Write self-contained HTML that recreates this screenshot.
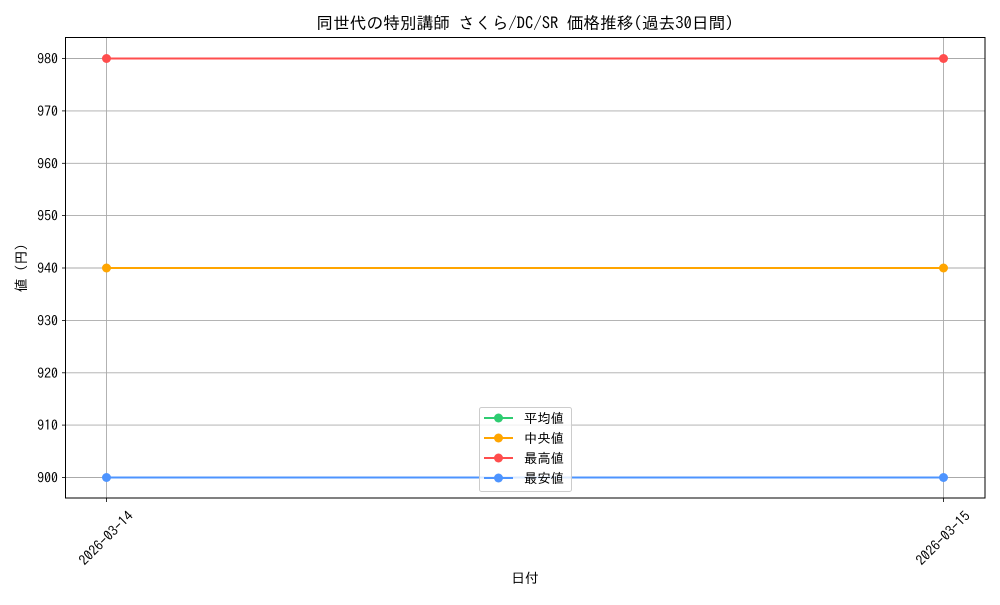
<!DOCTYPE html>
<html><head><meta charset="utf-8"><style>
html,body{margin:0;padding:0;background:#fff;}
svg text{font-family:"IPAGothic","Noto Sans CJK JP",sans-serif;fill:#000;}
</style></head><body>
<svg width="1000" height="600" viewBox="0 0 1000 600" xmlns="http://www.w3.org/2000/svg">
<rect width="1000" height="600" fill="#fff"/>
<text x="525" y="29" font-size="16.7" text-anchor="middle">同世代の特別講師 さくら/DC/SR 価格推移(過去30日間)</text>
<g stroke="#aaaaaa" stroke-width="0.9">
<line x1="66" x2="985" y1="58.5" y2="58.5"/>
<line x1="66" x2="985" y1="110.9" y2="110.9"/>
<line x1="66" x2="985" y1="163.3" y2="163.3"/>
<line x1="66" x2="985" y1="215.6" y2="215.6"/>
<line x1="66" x2="985" y1="268" y2="268"/>
<line x1="66" x2="985" y1="320.4" y2="320.4"/>
<line x1="66" x2="985" y1="372.8" y2="372.8"/>
<line x1="66" x2="985" y1="425.1" y2="425.1"/>
<line x1="66" x2="985" y1="477.5" y2="477.5"/>
<line x1="106.5" x2="106.5" y1="37" y2="498"/>
<line x1="943.5" x2="943.5" y1="37" y2="498"/>
</g>
<g stroke-width="2">
<line x1="106.5" x2="943.5" y1="268" y2="268" stroke="#2ecc71"/>
<line x1="106.5" x2="943.5" y1="268" y2="268" stroke="#ffa500"/>
<line x1="106.5" x2="943.5" y1="58.5" y2="58.5" stroke="#ff4d4d"/>
<line x1="106.5" x2="943.5" y1="477.5" y2="477.5" stroke="#4d94ff"/>
</g>
<g>
<circle cx="106.5" cy="268" r="4.5" fill="#ffa500"/><circle cx="943.5" cy="268" r="4.5" fill="#ffa500"/>
<circle cx="106.5" cy="58.5" r="4.5" fill="#ff4d4d"/><circle cx="943.5" cy="58.5" r="4.5" fill="#ff4d4d"/>
<circle cx="106.5" cy="477.5" r="4.5" fill="#4d94ff"/><circle cx="943.5" cy="477.5" r="4.5" fill="#4d94ff"/>
</g>
<rect x="65.5" y="37.5" width="919.5" height="460.5" fill="none" stroke="#000" stroke-width="1"/>
<g stroke="#000" stroke-width="0.8">
<line x1="62" x2="65.5" y1="58.5" y2="58.5"/><line x1="62" x2="65.5" y1="110.9" y2="110.9"/>
<line x1="62" x2="65.5" y1="163.3" y2="163.3"/><line x1="62" x2="65.5" y1="215.6" y2="215.6"/>
<line x1="62" x2="65.5" y1="268" y2="268"/><line x1="62" x2="65.5" y1="320.4" y2="320.4"/>
<line x1="62" x2="65.5" y1="372.8" y2="372.8"/><line x1="62" x2="65.5" y1="425.1" y2="425.1"/>
<line x1="62" x2="65.5" y1="477.5" y2="477.5"/>
<line x1="106.5" x2="106.5" y1="498" y2="502"/><line x1="943.5" x2="943.5" y1="498" y2="502"/>
</g>
<g font-size="13.9" text-anchor="end">
<text x="58" y="63.5">980</text><text x="58" y="115.9">970</text><text x="58" y="168.3">960</text>
<text x="58" y="220.6">950</text><text x="58" y="273">940</text><text x="58" y="325.4">930</text>
<text x="58" y="377.8">920</text><text x="58" y="430.1">910</text><text x="58" y="482.5">900</text>
<text transform="translate(134,517) rotate(-45)">2026-03-14</text>
<text transform="translate(971,517) rotate(-45)">2026-03-15</text>
</g>
<text x="525" y="583" font-size="13.9" text-anchor="middle">日付</text>
<text transform="translate(26,268) rotate(-90)" font-size="13.9" text-anchor="middle">値 (円)</text>
<rect x="479.5" y="407.5" width="92" height="84" rx="2" fill="#fff" fill-opacity="0.8" stroke="#ccc"/>
<g stroke-width="2">
<line x1="484" x2="513" y1="418" y2="418" stroke="#2ecc71"/><circle cx="498.5" cy="418" r="4.5" fill="#2ecc71"/>
<line x1="484" x2="513" y1="438" y2="438" stroke="#ffa500"/><circle cx="498.5" cy="438" r="4.5" fill="#ffa500"/>
<line x1="484" x2="513" y1="458" y2="458" stroke="#ff4d4d"/><circle cx="498.5" cy="458" r="4.5" fill="#ff4d4d"/>
<line x1="484" x2="513" y1="478" y2="478" stroke="#4d94ff"/><circle cx="498.5" cy="478" r="4.5" fill="#4d94ff"/>
</g>
<g font-size="13.4">
<text x="524" y="423">平均値</text><text x="524" y="443">中央値</text>
<text x="524" y="463">最高値</text><text x="524" y="483">最安値</text>
</g>
</svg>
</body></html>
